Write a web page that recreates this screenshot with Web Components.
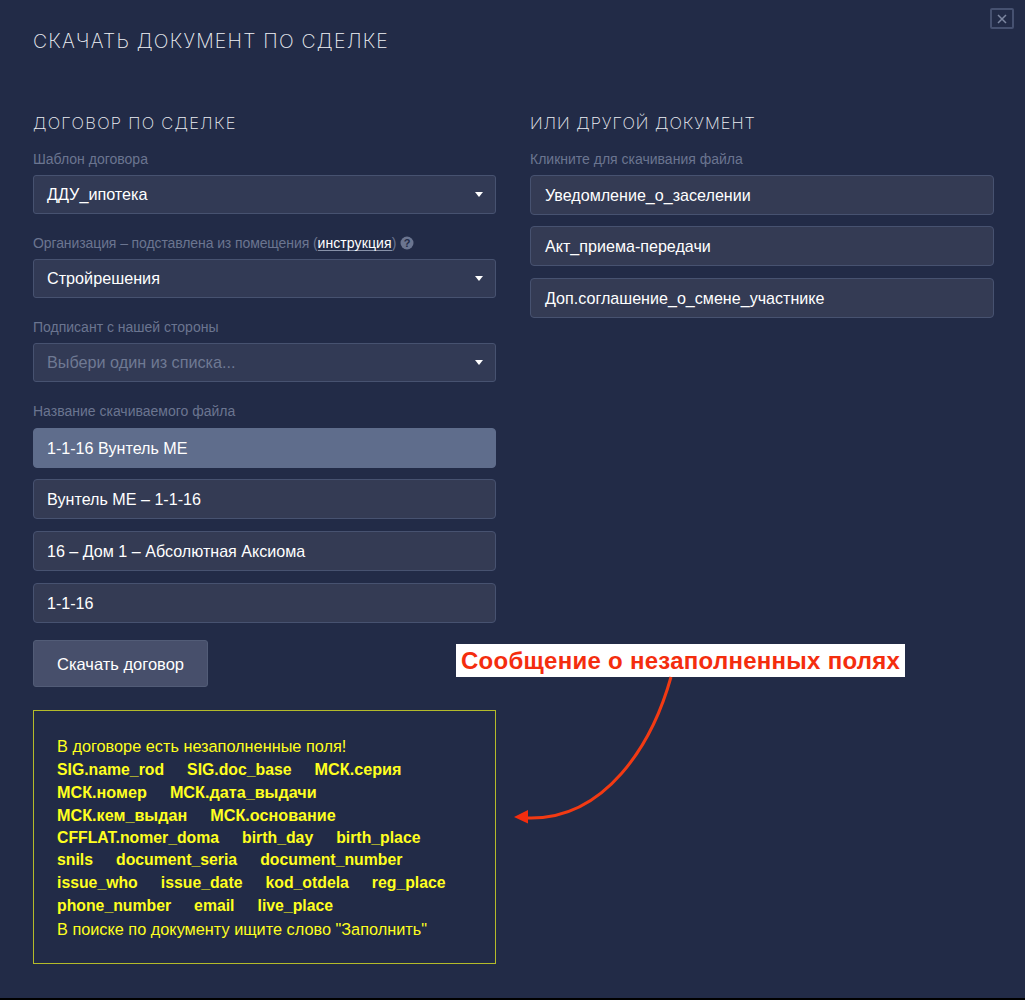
<!DOCTYPE html>
<html lang="ru">
  <head>
    <meta charset="UTF-8" />
    <title>Скачать документ по сделке</title>
    <style>
      html, body { margin: 0; background: #000; }
      body { font-family: "Liberation Sans", Arial, sans-serif; }
      deal-warning span.ru { font-size: 16.2px; }
    </style>
  </head>
  <body>
    <template id="modal-tpl">
      <style>
        :host { display: block; position: relative; box-sizing: border-box; height: 998px; padding: 31px 31px 0 33px; background: #222b47; color: #fff; }
        h1 { margin: 0 0 61px; height: 21px; font: 200 19.5px/21px Inter, sans-serif; letter-spacing: 1.22px; color: #f0f2f6; }
        .cols { display: grid; grid-template-columns: 463px 464px; column-gap: 34px; }
        .close { position: absolute; left: 990px; top: 8px; width: 24px; height: 21px; box-sizing: border-box; border: 2px solid #465170; border-radius: 2px; }
        .close svg { display: block; margin: 2.5px auto; }
      </style>
      <h1><slot name="title"></slot></h1>
      <div class="cols">
        <div><slot name="left"></slot></div>
        <div><slot name="right"></slot></div>
      </div>
      <div class="close"><svg width="12" height="12" viewBox="0 0 12 12"><path d="M2 2l8 8M10 2l-8 8" stroke="#7d87a1" stroke-width="1.5" fill="none"/></svg></div>
      <slot></slot>
    </template>

    <template id="heading-tpl">
      <style>
        :host { display: block; height: 20px; margin-bottom: 19px; font: 200 16.5px/20px Inter, sans-serif; letter-spacing: 1.26px; color: #eceef3; }
      </style>
      <slot></slot>
    </template>

    <template id="label-tpl">
      <style>
        :host { display: block; height: 16px; margin-bottom: 7px; font-size: 14px; line-height: 14px; color: #6b7590; white-space: nowrap; }
      </style>
      <slot></slot>
    </template>

    <template id="select-tpl">
      <style>
        :host { box-sizing: border-box; height: 39px; margin-bottom: 22px; padding: 0 12px 0 13px; display: flex; align-items: center; justify-content: space-between; background: #323a55; border: 1px solid #475270; border-radius: 3px; font-size: 16.2px; color: #fff; }
        :host([placeholder]) { color: #6f7993; }
        i { width: 0; height: 0; border-left: 4.5px solid transparent; border-right: 4.5px solid transparent; border-top: 5px solid #fff; }
      </style>
      <span><slot></slot></span><i></i>
    </template>

    <template id="choice-tpl">
      <style>
        :host { display: flex; align-items: center; box-sizing: border-box; height: 40px; margin-bottom: 12px; padding: 0 14px 0 var(--pad, 13px); background: #343b54; border: 1px solid #475270; border-radius: 4px; font-size: 16.1px; color: #fff; }
        :host(:first-of-type) { margin-bottom: 11px; }
        :host([active]) { background: #5f6d8c; border-color: #5f6d8c; }
      </style>
      <slot></slot>
    </template>

    <template id="button-tpl">
      <style>
        :host { display: flex; align-items: center; justify-content: center; box-sizing: border-box; width: 175px; height: 47px; margin: 17px 0 23px; padding-top: 1px; background: #474f6b; border: 1px solid #525c77; border-radius: 3px; font-size: 16.5px; color: #fff; }
      </style>
      <slot></slot>
    </template>

    <template id="warning-tpl">
      <style>
        :host { display: block; box-sizing: border-box; height: 254px; padding: 24px 23px; border: 1px solid #b4bb2a; font-size: 16.3px; line-height: 22.9px; color: #ffff1f; }
        ::slotted(b) { display: flex; align-items: baseline; gap: 23px; height: 22.9px; font-size: 15.8px; font-weight: 700; white-space: nowrap; }
      </style>
      <slot></slot>
    </template>

    <template id="callout-tpl">
      <style>
        :host { position: absolute; left: 456px; top: 644px; width: 449px; height: 33px; box-sizing: border-box; display: block; padding-left: 5px; background: #fff; font-weight: 700; font-size: 24px; line-height: 33px; letter-spacing: 0.27px; color: #f42d0e; white-space: nowrap; }
        svg { position: absolute; left: 50px; top: 32px; overflow: visible; }
      </style>
      <slot></slot>
      <svg width="170" height="160" viewBox="506 676 170 160">
        <path d="M671 677C652 745 605 820 528 818" stroke="#f23a13" stroke-width="3" fill="none"/>
        <path d="M514 817L528 810V823.5Z" fill="#f42d0e"/>
      </svg>
    </template>

    <deal-modal>
      <span slot="title">СКАЧАТЬ ДОКУМЕНТ ПО СДЕЛКЕ</span>
      <div slot="left">
        <deal-heading>ДОГОВОР ПО СДЕЛКЕ</deal-heading>
        <deal-label>Шаблон договора</deal-label>
        <deal-select>ДДУ_ипотека</deal-select>
        <deal-label style="letter-spacing:-.1px">Организация – подставлена из помещения (<span style="color:#fff;letter-spacing:.1px;box-shadow:inset 0 -1px #8791a8">инструкция</span>) <svg width="14" height="14" viewBox="0 0 14 14" style="vertical-align:-2px"><circle cx="7" cy="7" r="6.5" fill="#6b7590"/><text x="7" y="11" text-anchor="middle" font-size="11" font-weight="700" font-family="Liberation Sans" fill="#222b47">?</text></svg></deal-label>
        <deal-select>Стройрешения</deal-select>
        <deal-label>Подписант с нашей стороны</deal-label>
        <deal-select placeholder>Выбери один из списка...</deal-select>
        <deal-label style="margin-bottom:8px">Название скачиваемого файла</deal-label>
        <deal-choice active>1-1-16 Вунтель МЕ</deal-choice>
        <deal-choice>Вунтель МЕ – 1-1-16</deal-choice>
        <deal-choice>16 – Дом 1 – Абсолютная Аксиома</deal-choice>
        <deal-choice>1-1-16</deal-choice>
        <deal-button>Скачать договор</deal-button>
        <deal-warning>
          В договоре есть незаполненные поля!
          <b><span>SIG.name_rod</span><span>SIG.doc_base</span><span class="ru">МСК.серия</span></b>
          <b><span class="ru">МСК.номер</span><span class="ru">МСК.дата_выдачи</span></b>
          <b><span class="ru">МСК.кем_выдан</span><span class="ru">МСК.основание</span></b>
          <b><span>CFFLAT.nomer_doma</span><span>birth_day</span><span>birth_place</span></b>
          <b><span>snils</span><span>document_seria</span><span>document_number</span></b>
          <b><span>issue_who</span><span>issue_date</span><span>kod_otdela</span><span>reg_place</span></b>
          <b><span>phone_number</span><span>email</span><span>live_place</span></b>
          В поиске по документу ищите слово "Заполнить"
        </deal-warning>
      </div>
      <div slot="right" style="--pad:14px">
        <deal-heading style="letter-spacing:.96px">ИЛИ ДРУГОЙ ДОКУМЕНТ</deal-heading>
        <deal-label>Кликните для скачивания файла</deal-label>
        <deal-choice>Уведомление_о_заселении</deal-choice>
        <deal-choice>Акт_приема-передачи</deal-choice>
        <deal-choice>Доп.соглашение_о_смене_участнике</deal-choice>
      </div>
      <deal-callout>Сообщение о незаполненных полях</deal-callout>
    </deal-modal>

    <script type="module">
      // every element just stamps its template into an open shadow root
      const stamp = (name, tplId) => {
        const tpl = document.getElementById(tplId);
        customElements.define(name, class extends HTMLElement {
          constructor() {
            super();
            this.attachShadow({ mode: "open" }).appendChild(tpl.content.cloneNode(true));
          }
        });
      };

      stamp("deal-modal", "modal-tpl");
      stamp("deal-heading", "heading-tpl");
      stamp("deal-label", "label-tpl");
      stamp("deal-select", "select-tpl");
      stamp("deal-choice", "choice-tpl");
      stamp("deal-button", "button-tpl");
      stamp("deal-warning", "warning-tpl");
      stamp("deal-callout", "callout-tpl");
    </script>
  </body>
</html>
